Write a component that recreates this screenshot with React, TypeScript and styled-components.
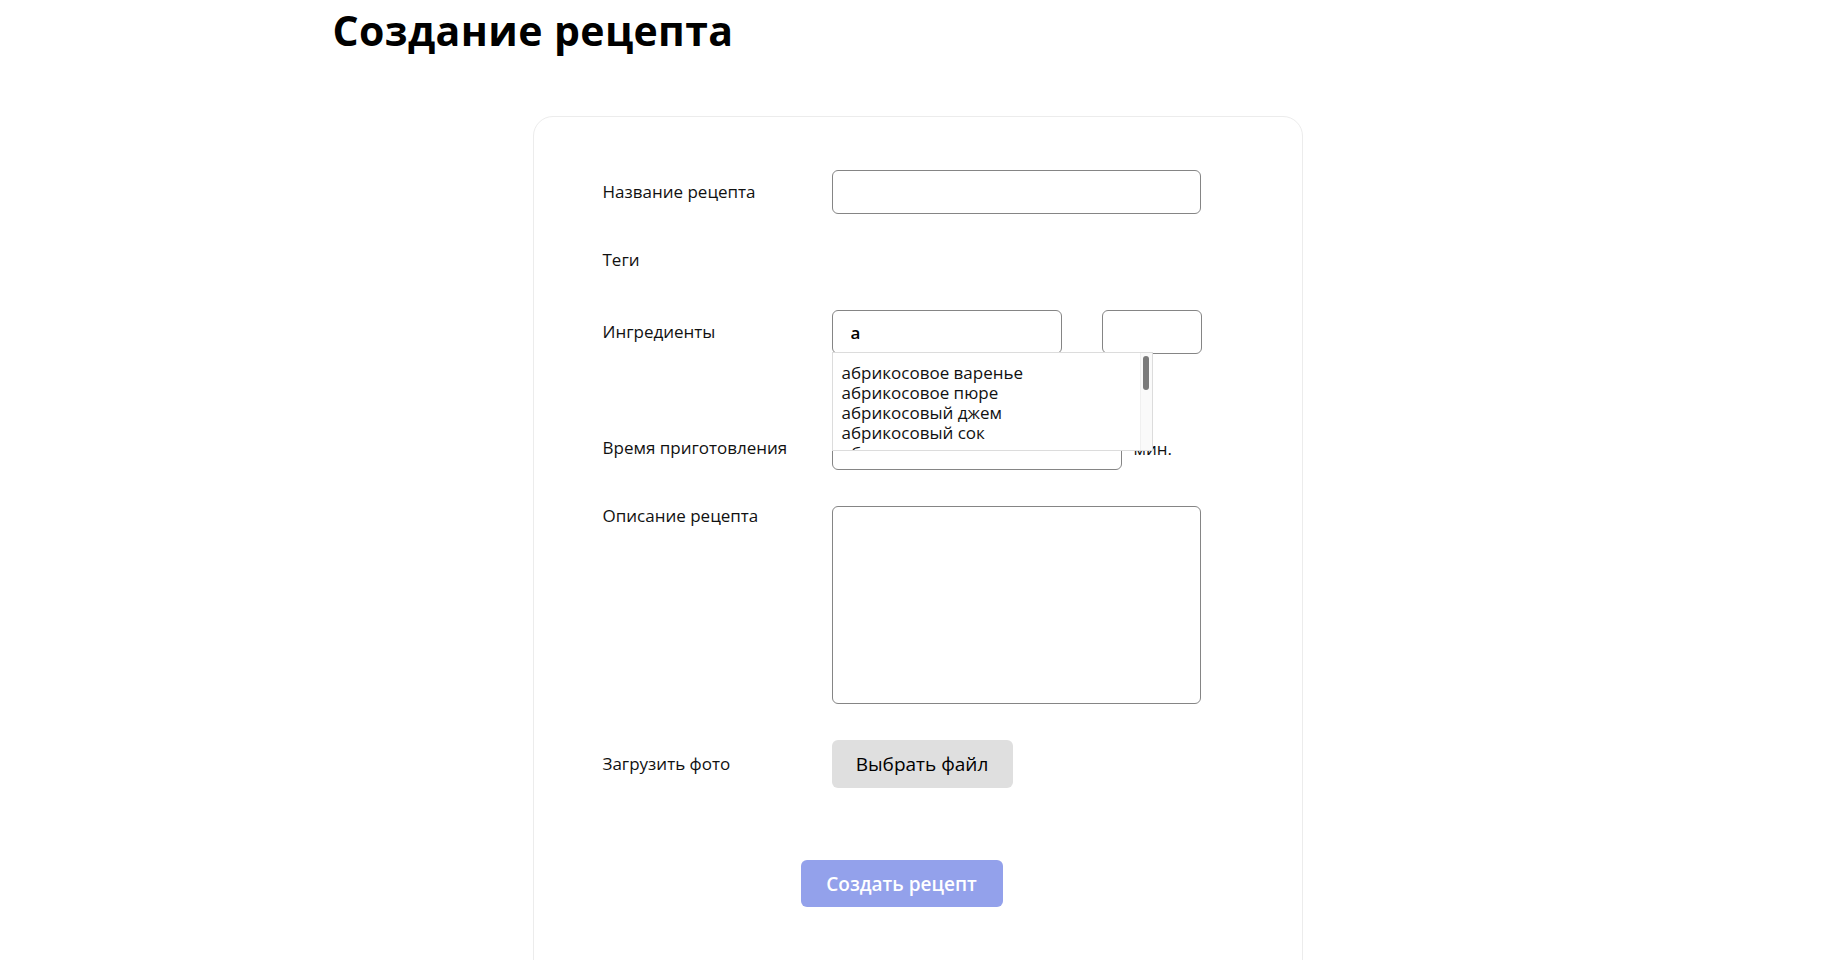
import React from "react";
import styled, { createGlobalStyle } from "styled-components";

const Global = createGlobalStyle`
  html, body { margin: 0; padding: 0; background: #fff; }
  body { font-family: "Open Sans", "Noto Sans", sans-serif; color: #000; }
  * { box-sizing: border-box; }
`;

const Page = styled.main`
  width: 1170px;
  margin: 0 auto;
  padding-top: 2px;
`;

const Title = styled.h1`
  margin: 0;
  font-size: 41px;
  line-height: 56px;
  font-weight: 700;
  letter-spacing: 0.4px;
`;

const Card = styled.section`
  width: 770px;
  margin: 58px auto 0;
  border: 1px solid #ececec;
  border-radius: 20px;
  padding: 53px 101px 80px 69px;
`;

const Form = styled.form`
  display: flex;
  flex-direction: column;
  gap: 36px;
`;

const Row = styled.div<{ $top?: boolean; $extra?: number; $h?: number }>`
  display: flex;
  align-items: ${(p) => (p.$top ? "flex-start" : "center")};
  min-height: ${(p) => (p.$h ? `${p.$h}px` : "auto")};
  margin-bottom: ${(p) => (p.$extra ? `${p.$extra}px` : "0")};
  position: relative;
`;

const Label = styled.label`
  width: 229px;
  flex: none;
  font-size: 17px;
  line-height: 20px;
  color: #111;
`;

const Input = styled.input<{ $w: number }>`
  width: ${(p) => p.$w}px;
  height: 44px;
  border: 1px solid #858585;
  border-radius: 6px;
  padding: 0 18px;
  font: inherit;
  font-size: 17px;
  font-weight: 600;
  color: #000;
  background: #fff;
  outline: none;
`;

const Controls = styled.div`
  display: flex;
  align-items: center;
  gap: 40px;
  position: relative;
`;

const Unit = styled.span`
  margin-left: 12px;
  font-size: 17px;
  color: #111;
`;

const TextArea = styled.textarea`
  width: 370px;
  height: 198px;
  border: 1px solid #858585;
  border-radius: 6px;
  resize: none;
  font: inherit;
  outline: none;
`;

const FileButton = styled.button`
  width: 181px;
  height: 48px;
  border: none;
  border-radius: 6px;
  background: #dfdfdf;
  font-family: inherit;
  font-size: 19px;
  color: #000;
  cursor: pointer;
`;

const Submit = styled.button`
  align-self: center;
  margin-top: 36px;
  width: 202px;
  height: 47px;
  border: none;
  border-radius: 6px;
  background: #93a1eb;
  color: #fff;
  font-family: inherit;
  font-size: 19px;
  font-weight: 600;
  cursor: pointer;
`;

const Dropdown = styled.div`
  position: absolute;
  left: 0;
  top: 42px;
  width: 321px;
  height: 99px;
  border: 1px solid #dcdcdc;
  background: #fff;
  overflow: hidden;
  z-index: 5;
  display: flex;
`;

const Options = styled.ul`
  list-style: none;
  margin: 0;
  padding: 10px 0 0 9px;
  flex: 1;
`;

const Option = styled.li`
  font-size: 17px;
  line-height: 20px;
  color: #111;
  white-space: nowrap;
`;

const Track = styled.div`
  width: 12px;
  flex: none;
  background: #fafafa;
  border-left: 1px solid #f0f0f0;
  padding: 3px 2px;
`;

const Thumb = styled.div`
  width: 6px;
  height: 34px;
  margin: 0 auto;
  border-radius: 3px;
  background: #7b7b7b;
`;

const options = [
  "абрикосовое варенье",
  "абрикосовое пюре",
  "абрикосовый джем",
  "абрикосовый сок",
  "абрикосы",
];

export default function App() {
  return (
    <>
      <Global />
      <Page>
        <Title>Создание рецепта</Title>
        <Card>
          <Form onSubmit={(e) => e.preventDefault()}>
            <Row>
              <Label>Название рецепта</Label>
              <Input $w={370} />
            </Row>
            <Row $h={24} $top>
              <Label>Теги</Label>
            </Row>
            <Row $extra={36}>
              <Label>Ингредиенты</Label>
              <Controls>
                <Input $w={230} defaultValue="а" />
                <Input $w={100} />
                <Dropdown>
                  <Options>
                    {options.map((o) => (
                      <Option key={o}>{o}</Option>
                    ))}
                  </Options>
                  <Track>
                    <Thumb />
                  </Track>
                </Dropdown>
              </Controls>
            </Row>
            <Row>
              <Label>Время приготовления</Label>
              <Input $w={290} />
              <Unit>мин.</Unit>
            </Row>
            <Row $top>
              <Label>Описание рецепта</Label>
              <TextArea />
            </Row>
            <Row>
              <Label>Загрузить фото</Label>
              <FileButton type="button">Выбрать файл</FileButton>
            </Row>
            <Submit type="submit">Создать рецепт</Submit>
          </Form>
        </Card>
      </Page>
    </>
  );
}
